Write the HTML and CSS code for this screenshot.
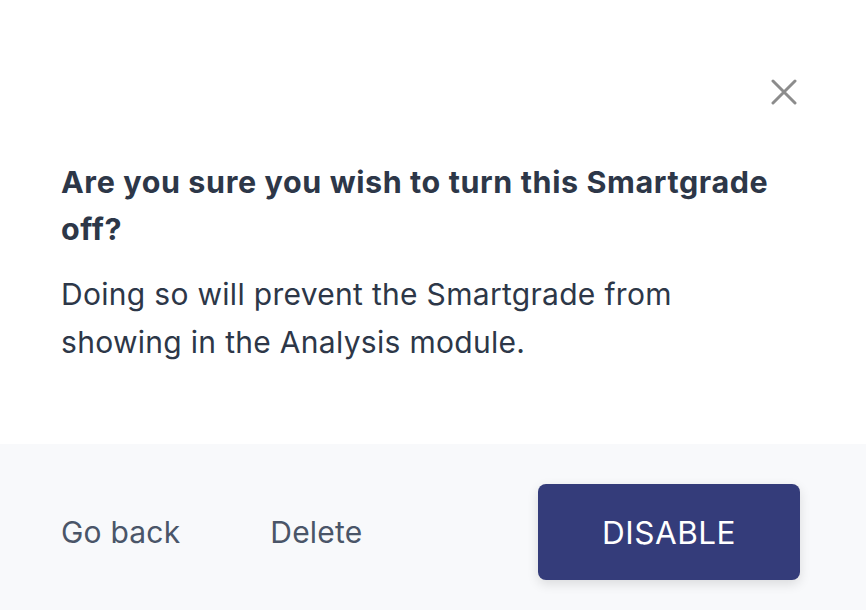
FILE: index.html
```html
<!DOCTYPE html>
<html>
<head>
<meta charset="utf-8">
<link rel="stylesheet" href="styles.css">
</head>
<body>
<div class="modal">
  <div class="body">
    <div class="close-row">
      <svg class="close" width="26" height="26" viewBox="0 0 26 26"><path d="M2 2 L24 24 M24 2 L2 24" stroke="#8c8c8c" stroke-width="3" stroke-linecap="round"/></svg>
    </div>
    <h1 class="title">Are you sure you wish to turn this Smartgrade off?</h1>
    <p class="text">Doing so will prevent the Smartgrade from showing in the Analysis module.</p>
  </div>
  <div class="footer">
    <div class="links">
      <span class="link">Go back</span>
      <span class="link">Delete</span>
    </div>
    <button class="btn">DISABLE</button>
  </div>
</div>
</body>
</html>
```
FILE: styles.css
```css
html, body { margin: 0; padding: 0; background: #fff; }
body { font-family: Inter, "Noto Sans", sans-serif; color: #2d3748; }
.modal { width: 866px; height: 610px; display: flex; flex-direction: column; }
.body { height: 444px; box-sizing: border-box; padding: 79px 70px 0 61px; }
.close-row { display: flex; justify-content: flex-end; }
.close { display: block; margin-right: -1px; }
.title { margin: 53px 0 0; font-size: 30.5px; font-weight: 700; line-height: 47px; letter-spacing: 0.6px; color: #2d3748; width: 735px; }
.text { margin: 18px 0 0; font-size: 30px; font-weight: 400; line-height: 48px; letter-spacing: 0.3px; color: #2d3748; width: 640px; }
.footer { flex: 1; background: #f8f9fb; display: flex; align-items: center; justify-content: space-between; padding: 10px 66px 0 61px; }
.links { display: flex; gap: 90px; }
.link { font-size: 30px; color: #4a5568; letter-spacing: 0.2px; }
.btn { width: 262px; height: 96px; border: 0; border-radius: 8px; background: #343c7a; color: #fff; font-family: Inter, sans-serif; font-size: 31.5px; font-weight: 400; letter-spacing: 0.5px; box-shadow: 0 4px 12px rgba(0,0,0,0.12); }
```
